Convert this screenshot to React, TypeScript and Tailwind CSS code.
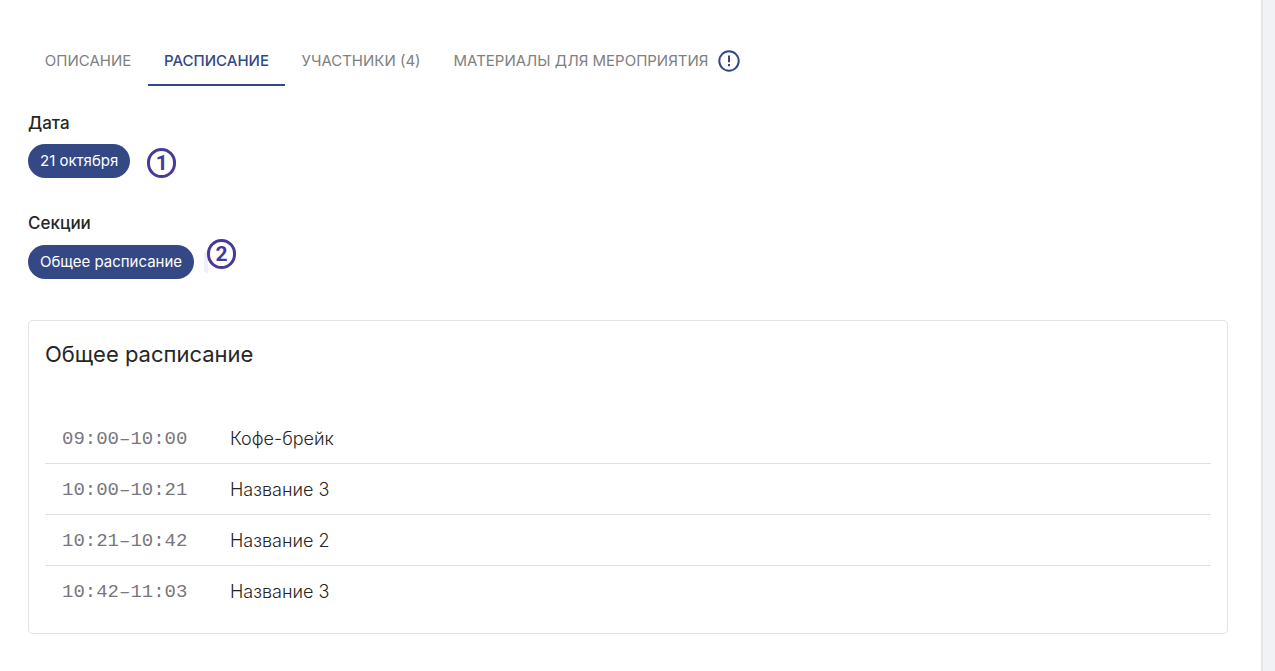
import React, { useState } from 'react';
import clsx from 'clsx';

interface Session {
  time: string;
  title: string;
}

const tabs = [
  { id: 'about', label: 'ОПИСАНИЕ', width: 'min-w-[120px]' },
  { id: 'schedule', label: 'РАСПИСАНИЕ', width: 'min-w-[137px]' },
  { id: 'members', label: 'УЧАСТНИКИ (4)', width: 'min-w-[152px]' },
  { id: 'materials', label: 'МАТЕРИАЛЫ ДЛЯ МЕРОПРИЯТИЯ', width: 'min-w-[320px]', alert: true },
];

const sessions: Session[] = [
  { time: '09:00–10:00', title: 'Кофе-брейк' },
  { time: '10:00–10:21', title: 'Название 3' },
  { time: '10:21–10:42', title: 'Название 2' },
  { time: '10:42–11:03', title: 'Название 3' },
];

const AlertIcon: React.FC = () => (
  <svg width="22" height="22" viewBox="0 0 22 22" fill="none" stroke="#344886" strokeWidth="2" aria-hidden="true">
    <circle cx="11" cy="11" r="9.7" />
    <path d="M11 5.5v6.7M11 14v2.2" />
  </svg>
);

const StepMark: React.FC<{ value: number }> = ({ value }) => (
  <span className="flex h-[30px] w-[29px] items-center justify-center rounded-full border-3 border-[#473a97] bg-white font-['Roboto'] text-[21px] leading-none font-bold text-[#473a97]">
    {value}
  </span>
);

const Chip: React.FC<{ children: React.ReactNode }> = ({ children }) => (
  <button className="h-[34px] rounded-full bg-[#344886] px-3 text-[15px] text-white">{children}</button>
);

const App: React.FC = () => {
  const [active, setActive] = useState('schedule');

  return (
    <div className="flex min-h-screen bg-[#f1f2f5] pr-3 font-['Inter',sans-serif] text-[#262626]">
      <main className="flex-1 border-r-2 border-[#e6e7e9] bg-white px-7 pt-9 pb-9">
        <nav className="flex" role="tablist">
          {tabs.map((tab) => (
            <button
              key={tab.id}
              role="tab"
              aria-selected={active === tab.id}
              onClick={() => setActive(tab.id)}
              className={clsx(
                'flex h-[50px] items-center justify-center gap-2.5 border-b-2 pt-0.5 text-[15px] whitespace-nowrap',
                tab.width,
                active === tab.id ? 'border-[#344886] font-medium text-[#344886]' : 'border-transparent text-[#808080]',
              )}
            >
              {tab.label}
              {tab.alert && <AlertIcon />}
            </button>
          ))}
        </nav>

        <section className="mt-[25px]">
          <h2 className="text-[17px] leading-6 font-medium">Дата</h2>
          <div className="mt-[9px] flex h-[34px] items-end gap-[17px]">
            <Chip>21 октября</Chip>
            <StepMark value={1} />
          </div>
        </section>

        <section className="mt-[33px]">
          <h2 className="text-[17px] leading-6 font-medium">Секции</h2>
          <div className="mt-2.5 flex h-[34px] items-center gap-2.5">
            <Chip>Общее расписание</Chip>
            <div className="relative h-[34px] w-8">
              <span className="absolute top-1.5 left-0 h-[22px] w-1 rounded-l-full bg-[#eeeff8]" />
              <div className="absolute -top-1.5 left-[3px]">
                <StepMark value={2} />
              </div>
            </div>
          </div>
        </section>

        <section className="mt-[41px] mr-[5px] rounded border border-[#e4e4e4] p-4">
          <h2 className="text-[22px] leading-[34px]">Общее расписание</h2>
          <table className="mt-[42px] w-full border-separate border-spacing-0 text-left text-[18px]">
            <tbody>
              {sessions.map((s, i) => (
                <tr key={i} className="group">
                  <td className="h-[51px] w-[185px] border-b border-[#e0e0e0] pt-0.5 pl-[17px] font-['Liberation_Mono',monospace] text-[19px] whitespace-nowrap text-[#77777c] group-last:border-0">
                    {s.time}
                  </td>
                  <td className="border-b border-[#e0e0e0] font-light group-last:border-0">{s.title}</td>
                </tr>
              ))}
            </tbody>
          </table>
        </section>
      </main>
    </div>
  );
};

export default App;
